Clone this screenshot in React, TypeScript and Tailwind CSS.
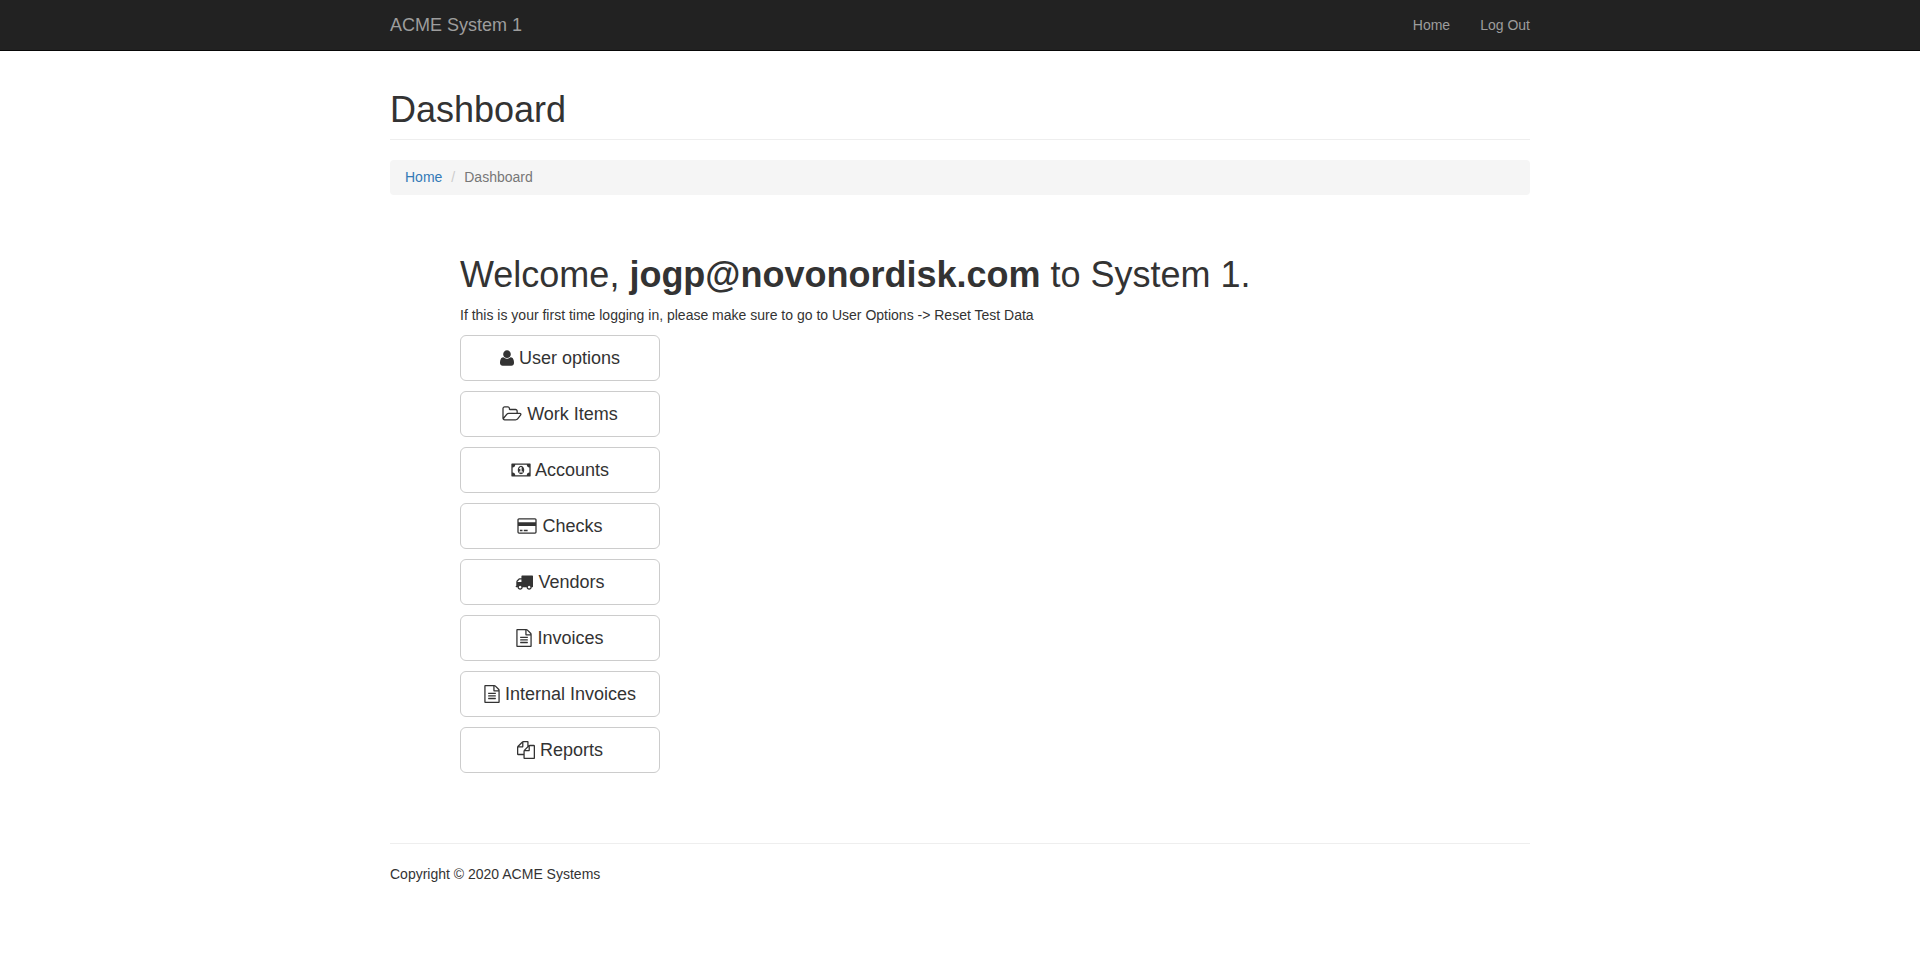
import React from "react";

type Item = { label: string; viewBox: string; size: string; path: string };

const FILE_TEXT =
  "M1596 380q28 28 48 76t20 88v1152q0 40-28 68t-68 28h-1344q-40 0-68-28t-28-68v-1600q0-40 28-68t68-28h896q40 0 88 20t76 48zm-444-244v376h376q-10-29-22-41l-313-313q-12-12-41-22zm384 1528v-1024h-416q-40 0-68-28t-28-68v-416h-768v1536h1280zm-1024-864q0-14 9-23t23-9h704q14 0 23 9t9 23v64q0 14-9 23t-23 9h-704q-14 0-23-9t-9-23v-64zm736 224q14 0 23 9t9 23v64q0 14-9 23t-23 9h-704q-14 0-23-9t-9-23v-64q0-14 9-23t23-9h704zm0 256q14 0 23 9t9 23v64q0 14-9 23t-23 9h-704q-14 0-23-9t-9-23v-64q0-14 9-23t23-9h704z";

const items: Item[] = [
  {
    label: "User options",
    viewBox: "192 0 1408 1792",
    size: "w-[14px]",
    path: "M1600 1405q0 120-73 189.5t-194 69.5h-874q-121 0-194-69.5t-73-189.5q0-53 3.5-103.5t14-109 26.5-108.5 43-97.5 62-81 85.5-53.5 111.5-20q9 0 42 21.5t74.5 48 108 48 133.5 21.5 133.5-21.5 108-48 74.5-48 42-21.5q61 0 111.5 20t85.5 53.5 62 81 43 97.5 26.5 108.5 14 109 3.5 103.5zm-320-893q0 159-112.5 271.5t-271.5 112.5-271.5-112.5-112.5-271.5 112.5-271.5 271.5-112.5 271.5 112.5 112.5 271.5z",
  },
  {
    label: "Work Items",
    viewBox: "-64 0 1920 1792",
    size: "w-5",
    path: "M1717 931q0-35-53-35h-1088q-40 0-85.5 21.5t-71.5 52.5l-294 363q-18 24-18 40 0 35 53 35h1088q40 0 86-22t71-53l294-363q18-22 18-39zm-1141-163h768v-160q0-40-28-68t-68-28h-576q-40 0-68-28t-28-68v-64q0-40-28-68t-68-28h-320q-40 0-68 28t-28 68v853l256-315q44-53 116-87.5t140-34.5zm1269 163q0 62-46 120l-295 363q-43 53-116 87.5t-140 34.5h-1088q-92 0-158-66t-66-158v-960q0-92 66-158t158-66h320q92 0 158 66t66 158v32h544q92 0 158 66t66 158v160h192q54 0 99 24.5t67 70.5q15 32 15 68z",
  },
  {
    label: "Accounts",
    viewBox: "0 0 1920 1792",
    size: "w-5",
    path: "M768 1152h384v-96h-128v-448h-114l-148 137 77 80q42-37 55-57h2v288h-128v96zm512-256q0 70-21 142t-59.5 134-101.5 101-138 39-138-39-101.5-101-59.5-134-21-142 21-142 59.5-134 101.5-101 138-39 138 39 101.5 101 59.5 134 21 142zm512 256v-512q-106 0-181-75t-75-181h-1152q0 106-75 181t-181 75v512q106 0 181 75t75 181h1152q0-106 75-181t181-75zm128-832v1152q0 26-19 45t-45 19h-1792q-26 0-45-19t-19-45v-1152q0-26 19-45t45-19h1792q26 0 45 19t19 45z",
  },
  {
    label: "Checks",
    viewBox: "0 0 1920 1792",
    size: "w-5",
    path: "M1760 128q66 0 113 47t47 113v1216q0 66-47 113t-113 47h-1600q-66 0-113-47t-47-113v-1216q0-66 47-113t113-47h1600zm-1600 128q-13 0-22.5 9.5t-9.5 22.5v224h1664v-224q0-13-9.5-22.5t-22.5-9.5h-1600zm1600 1280q13 0 22.5-9.5t9.5-22.5v-608h-1664v608q0 13 9.5 22.5t22.5 9.5h1600zm-1504-128v-128h256v128h-256zm384 0v-128h384v128h-384z",
  },
  {
    label: "Vendors",
    viewBox: "0 0 1792 1792",
    size: "w-[18px]",
    path: "M640 1408q0-52-38-90t-90-38-90 38-38 90 38 90 90 38 90-38 38-90zm-384-512h384v-256h-158q-13 0-22 9l-195 195q-9 9-9 22v30zm1280 512q0-52-38-90t-90-38-90 38-38 90 38 90 90 38 90-38 38-90zm256-1088v1024q0 15-4 26.5t-13.5 18.5-16.5 11.5-23.5 6-22.5 2-25.5 0-22.5-.5q0 106-75 181t-181 75-181-75-75-181h-384q0 106-75 181t-181 75-181-75-75-181h-64q-3 0-22.5.5t-25.5 0-22.5-2-23.5-6-16.5-11.5-13.5-18.5-4-26.5q0-26 19-45t45-19v-320q0-8-.5-35t0-38 2.5-34.5 6.5-37 14-30.5 22.5-30l198-198q19-19 50.5-32t58.5-13h160v-192q0-26 19-45t45-19h1024q26 0 45 19t19 45z",
  },
  { label: "Invoices", viewBox: "128 0 1536 1792", size: "w-4", path: FILE_TEXT },
  { label: "Internal Invoices", viewBox: "128 0 1536 1792", size: "w-4", path: FILE_TEXT },
  {
    label: "Reports",
    viewBox: "0 0 1792 1792",
    size: "w-[18px]",
    path: "M1696 384q40 0 68 28t28 68v1216q0 40-28 68t-68 28h-960q-40 0-68-28t-28-68v-288h-544q-40 0-68-28t-28-68v-672q0-40 20-88t48-76l408-408q28-28 76-48t88-20h416q40 0 68 28t28 68v328q68-40 128-40h416zm-544 213l-299 299h299v-299zm-640-384l-299 299h299v-299zm196 647l316-316v-416h-384v416q0 40-28 68t-68 28h-416v640h512v-256q0-40 20-88t48-76zm956 804v-1152h-384v416q0 40-28 68t-68 28h-416v640h896z",
  },
];

function MenuButton({ label, viewBox, size, path }: Item) {
  return (
    <button
      type="button"
      className="w-[200px] cursor-pointer rounded-md border border-[#ccc] bg-white py-2.5 text-center text-lg leading-6 text-[#333] hover:bg-[#e6e6e6]"
    >
      <svg
        aria-hidden="true"
        viewBox={viewBox}
        className={`inline-block h-[18px] overflow-visible fill-current align-[-3px] ${size}`}
      >
        <path d={path} />
      </svg>{" "}
      {label}
    </button>
  );
}

export default function App() {
  return (
    <div className="bg-white font-['Liberation_Sans',Arial,sans-serif] text-sm leading-5 text-[#333]">
      <nav className="border-b border-[#080808] bg-[#222] text-[#9d9d9d]">
        <div className="mx-auto flex max-w-[1170px] items-center justify-between px-[15px]">
          <a href="#" className="py-[15px] text-lg leading-5 hover:text-white">
            ACME System 1
          </a>
          <div className="flex gap-[30px]">
            <a href="#" className="py-[15px] hover:text-white">
              Home
            </a>
            <a href="#" className="py-[15px] hover:text-white">
              Log Out
            </a>
          </div>
        </div>
      </nav>

      <div className="mx-auto max-w-[1170px] px-[15px]">
        <header className="mt-[39px] mb-5 border-b border-[#eee] pb-[9px]">
          <h1 className="text-4xl leading-10">Dashboard</h1>
        </header>

        <ol className="flex rounded bg-[#f5f5f5] px-[15px] pt-[7px] pb-2">
          <li>
            <a href="#" className="text-[#337ab7] hover:underline">
              Home
            </a>
          </li>
          <li aria-hidden="true" className="px-[9px] text-[#ccc]">
            /
          </li>
          <li className="text-[#777]">Dashboard</li>
        </ol>

        <main className="px-[70px] pt-[60px] pb-[70px]">
          <h1 className="mb-2.5 text-4xl leading-10">
            Welcome, <b>jogp@novonordisk.com</b> to System 1.
          </h1>
          <p className="mb-2.5">
            If this is your first time logging in, please make sure to go to User Options -&gt; Reset Test Data
          </p>
          <div className="flex flex-col items-start gap-2.5">
            {items.map((item) => (
              <MenuButton key={item.label} {...item} />
            ))}
          </div>
        </main>

        <footer className="border-t border-[#eee] py-5">
          <p>Copyright © 2020 ACME Systems</p>
        </footer>
      </div>
    </div>
  );
}
